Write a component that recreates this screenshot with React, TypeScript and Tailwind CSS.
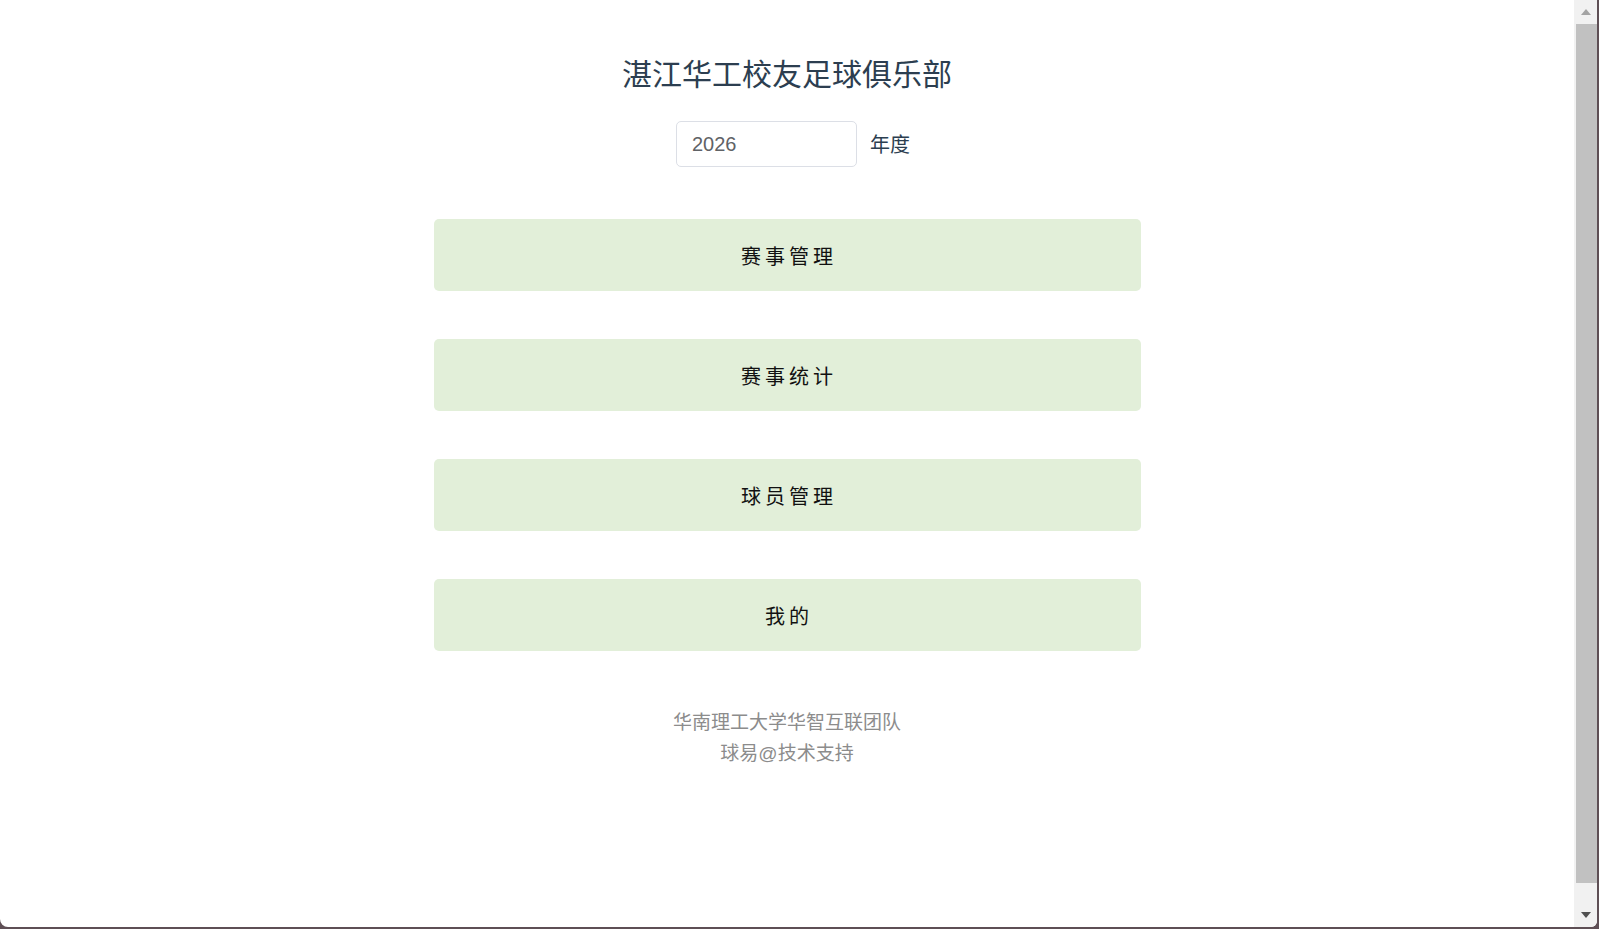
import { useState } from "react";

const menu = ["赛事管理", "赛事统计", "球员管理", "我的"];

function ScrollBar() {
  return (
    <div className="flex w-[23px] shrink-0 flex-col items-stretch bg-[#f1f1f1]">
      <div className="flex h-[24px] items-center justify-center">
        <div className="h-0 w-0 border-x-[5px] border-b-[6px] border-x-transparent border-b-[#a3a3a3]" />
      </div>
      <div className="ml-[2px] flex-1 bg-[#c1c1c1]" />
      <div className="flex h-[44px] items-start justify-center pt-[29px]">
        <div className="h-0 w-0 border-x-[5px] border-t-[6px] border-x-transparent border-t-[#505050]" />
      </div>
    </div>
  );
}

export default function App() {
  const [year, setYear] = useState("2026");

  return (
    <div className="h-[929px] w-full overflow-hidden bg-[#5e4f55] pb-[2px] pr-[2px]">
      <div className="flex h-full overflow-hidden rounded-bl-[8px] rounded-br-[6px] bg-white">
        <main
          className="flex flex-1 flex-col items-center text-[#2c3e50]"
          style={{ fontFamily: '"Liberation Sans", "Noto Sans CJK SC", sans-serif' }}
        >
          <h1 className="mt-[55px] h-[40px] text-[30px] font-normal leading-[40px]">
            湛江华工校友足球俱乐部
          </h1>

          <div className="mt-[26px] flex items-center gap-[13px] pl-[12px]">
            <input
              value={year}
              onChange={(e) => setYear(e.target.value)}
              className="h-[46px] w-[181px] rounded-[5px] border border-[#dcdfe6] px-[15px] text-[20px] text-[#606266] outline-none"
            />
            <span className="mt-[2px] text-[20px] leading-none">年度</span>
          </div>

          <div className="mt-[52px] flex w-[707px] flex-col gap-[48px]">
            {menu.map((label) => (
              <button
                key={label}
                className="flex h-[72px] items-center justify-center rounded-[5px] bg-[#e2efd9] pl-[4px] pt-[3px] text-[20px] tracking-[4px] text-[#111]"
              >
                {label}
              </button>
            ))}
          </div>

          <div className="mt-[56px] text-center text-[19px] leading-[31px] text-[#8c8c8c]">
            <p>华南理工大学华智互联团队</p>
            <p>球易@技术支持</p>
          </div>
        </main>
        <ScrollBar />
      </div>
    </div>
  );
}
